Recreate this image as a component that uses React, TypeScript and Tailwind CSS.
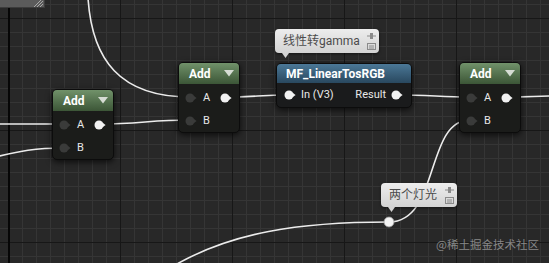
import React from 'react';

// material graph: Add -> Add -> MF_LinearTosRGB -> Add

function Pin({ light }: { light?: boolean }) {
  const c = light ? '#f2f2f2' : '#3a3b3a';
  return (
    <svg width="12" height="10" viewBox="0 0 12 10" className="shrink-0">
      <circle cx="5" cy="5" r="4.5" fill={c} />
      <path d="M8.3 2.6 L11.6 5 L8.3 7.4 Z" fill={c} />
    </svg>
  );
}

function Caret() {
  return (
    <svg width="10" height="7" viewBox="0 0 10 7">
      <path d="M0 0 L10 0 L5 6.5 Z" fill="#d6dcd4" />
    </svg>
  );
}

function AddNode({ pos }: { pos: string }) {
  return (
    <div className={`absolute ${pos} w-[62px] rounded-[5px] bg-[#1b1c1a] border border-[#0c0c0c] shadow-[0_2px_6px_rgba(0,0,0,0.7)] overflow-hidden`}>
      <div className="h-[21px] flex items-center justify-between pl-[10px] pr-[5px] bg-linear-to-b from-[#71926a] to-[#3c5637]">
        <span className="text-[12px] font-bold text-white leading-none">Add</span>
        <Caret />
      </div>
      <div className="pt-[2px]">
        <div className="h-[23px] flex items-center pl-[6px] pr-[7px]">
          <Pin />
          <span className="ml-[6px] text-[11px] text-[#e8e8e8] leading-none">A</span>
          <span className="ml-auto flex"><Pin light /></span>
        </div>
        <div className="h-[23px] flex items-center pl-[6px] pr-[7px]">
          <Pin />
          <span className="ml-[6px] text-[11px] text-[#e8e8e8] leading-none">B</span>
        </div>
      </div>
    </div>
  );
}

function BubbleIcons() {
  return (
    <div className="absolute right-[3px] top-[4px] flex flex-col items-center gap-[4px]">
      <svg width="9" height="6" viewBox="0 0 9 6">
        <path d="M0 3 H9" stroke="#8a8a8a" strokeWidth="1" />
        <rect x="3" y="0" width="3" height="6" fill="#8a8a8a" />
      </svg>
      <svg width="9" height="7" viewBox="0 0 9 7">
        <rect x="0.5" y="0.5" width="8" height="6" fill="none" stroke="#8a8a8a" strokeWidth="1" />
        <path d="M2 3 H7 M2 5 H7" stroke="#8a8a8a" strokeWidth="1" />
      </svg>
    </div>
  );
}

function Bubble({ pos, text }: { pos: string; text: string }) {
  return (
    <div className={`absolute ${pos} h-[24px] rounded-[4px] bg-linear-to-b from-[#ededed] to-[#d3d3d3] shadow-[0_1px_3px_rgba(0,0,0,0.5)] flex items-center pl-[8px]`}>
      <span className="text-[12px] text-[#4c4c4c] leading-none">{text}</span>
      <BubbleIcons />
      <svg width="7" height="5" viewBox="0 0 7 5" className="absolute left-[7px] -bottom-[5px]">
        <path d="M0 0 L7 0 L3.5 5 Z" fill="#d3d3d3" />
      </svg>
    </div>
  );
}

function Grid() {
  const majorX = [120, 232, 344, 456];
  const majorY = [18, 130, 242];
  return (
    <svg className="absolute inset-0" width="549" height="263">
      <defs>
        <pattern id="minor" x="8" y="4" width="14" height="14" patternUnits="userSpaceOnUse">
          <path d="M0.5 0 V14 M0 0.5 H14" stroke="#353535" strokeWidth="1" />
        </pattern>
      </defs>
      <rect width="549" height="263" fill="#282828" />
      <rect width="549" height="263" fill="url(#minor)" />
      {majorX.map((x) => (
        <line key={x} x1={x + 0.5} y1="0" x2={x + 0.5} y2="263" stroke="#171717" />
      ))}
      {majorY.map((y) => (
        <line key={y} x1="0" y1={y + 0.5} x2="549" y2={y + 0.5} stroke="#171717" />
      ))}
      <line x1="9" y1="0" x2="9" y2="263" stroke="#060606" strokeWidth="2" />
    </svg>
  );
}

function Wires() {
  const w = { stroke: '#ececec', strokeWidth: 1.6, fill: 'none' };
  return (
    <svg className="absolute inset-0" width="549" height="263">
      <path d="M88 -2 C92 60 120 97 190 97" {...w} />
      <path d="M-5 124 L64 124" {...w} />
      <path d="M-5 157 C20 151 35 148 64 148" {...w} />
      <path d="M99 124 C140 124 150 120 190 120" {...w} />
      <path d="M225 97 C255 97 260 95 289 95" {...w} />
      <path d="M396 95 C430 95 440 97 470 97" {...w} />
      <path d="M505 97 C530 97 535 96 555 96" {...w} />
      <path d="M170 268 C230 232 300 222 389 222" {...w} />
      <path d="M389 222 C440 222 425 120 470 120" {...w} />
    </svg>
  );
}

export default function App() {
  return (
    <div className="relative w-[549px] h-[263px] overflow-hidden bg-[#282828] font-['Roboto','Noto_Sans_CJK_SC',sans-serif]">
      <Grid />
      <Wires />

      {/* comment box corner, top left */}
      <div className="absolute left-0 top-0 w-[45px] h-[8px] bg-[#5b5b5b] border-b border-r border-[#3c3c3c]">
        <svg width="12" height="7" viewBox="0 0 12 7" className="absolute right-[1px] bottom-0">
          <path d="M3 7 L10 0 M6 7 L12 1 M9 7 L12 4" stroke="#a8a8a8" strokeWidth="1" />
        </svg>
      </div>

      <AddNode pos="left-[52px] top-[89px]" />
      <AddNode pos="left-[178px] top-[62px]" />
      <AddNode pos="left-[459px] top-[62px]" />

      <div className="absolute left-[276px] top-[63px] w-[136px] rounded-[5px] bg-[#1a1b1c] border border-[#0c0c0c] shadow-[0_2px_6px_rgba(0,0,0,0.7)] overflow-hidden">
        <div className="h-[19px] flex items-center pl-[9px] bg-linear-to-b from-[#4b7897] to-[#29485f]">
          <span className="text-[12px] font-bold text-white leading-none">MF_LinearTosRGB</span>
        </div>
        <div className="h-[23px] flex items-center pl-[7px] pr-[8px] mb-[1px]">
          <Pin light />
          <span className="ml-[5px] text-[11px] text-[#e8e8e8] leading-none">In (V3)</span>
          <span className="ml-auto text-[11px] text-[#e8e8e8] leading-none">Result</span>
          <span className="ml-[5px] flex"><Pin light /></span>
        </div>
      </div>

      <Bubble pos="left-[275px] top-[29px] w-[104px]" text="线性转gamma" />
      <Bubble pos="left-[381px] top-[183px] w-[76px]" text="两个灯光" />

      <svg className="absolute left-[383px] top-[216px]" width="12" height="12" viewBox="0 0 12 12">
        <circle cx="6" cy="6" r="5" fill="#f4f4f4" stroke="#9a9a9a" strokeWidth="0.8" />
      </svg>

      <span className="absolute left-[436px] top-[239px] text-[11.5px] leading-none text-white/45 font-['Noto_Sans_CJK_SC',sans-serif]">
        @稀土掘金技术社区
      </span>
    </div>
  );
}
